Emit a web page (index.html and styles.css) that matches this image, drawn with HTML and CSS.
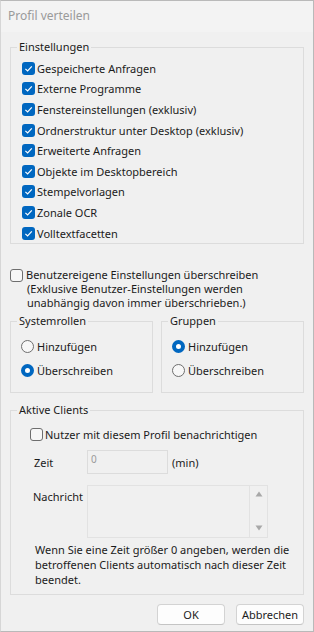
FILE: index.html
```html
<!DOCTYPE html>
<html lang="de">
<head>
	<meta charset="utf-8">
	<title>Profil verteilen</title>
	<link rel="stylesheet" href="styles.css">
</head>
<body>
	<div class="window">
		<div class="titlebar">Profil verteilen</div>

		<div class="content">
			<fieldset class="group">
				<legend>Einstellungen</legend>
				<div class="group-body settings">
					<label class="check"><span class="box on"><svg viewBox="0 0 13 13"><path d="M3.4 6.8 L5.6 9 L9.8 4.4"/></svg></span>Gespeicherte Anfragen</label>
					<label class="check"><span class="box on"><svg viewBox="0 0 13 13"><path d="M3.4 6.8 L5.6 9 L9.8 4.4"/></svg></span>Externe Programme</label>
					<label class="check"><span class="box on"><svg viewBox="0 0 13 13"><path d="M3.4 6.8 L5.6 9 L9.8 4.4"/></svg></span>Fenstereinstellungen (exklusiv)</label>
					<label class="check"><span class="box on"><svg viewBox="0 0 13 13"><path d="M3.4 6.8 L5.6 9 L9.8 4.4"/></svg></span>Ordnerstruktur unter Desktop (exklusiv)</label>
					<label class="check"><span class="box on"><svg viewBox="0 0 13 13"><path d="M3.4 6.8 L5.6 9 L9.8 4.4"/></svg></span>Erweiterte Anfragen</label>
					<label class="check"><span class="box on"><svg viewBox="0 0 13 13"><path d="M3.4 6.8 L5.6 9 L9.8 4.4"/></svg></span>Objekte im Desktopbereich</label>
					<label class="check"><span class="box on"><svg viewBox="0 0 13 13"><path d="M3.4 6.8 L5.6 9 L9.8 4.4"/></svg></span>Stempelvorlagen</label>
					<label class="check"><span class="box on"><svg viewBox="0 0 13 13"><path d="M3.4 6.8 L5.6 9 L9.8 4.4"/></svg></span>Zonale OCR</label>
					<label class="check"><span class="box on"><svg viewBox="0 0 13 13"><path d="M3.4 6.8 L5.6 9 L9.8 4.4"/></svg></span>Volltextfacetten</label>
				</div>
			</fieldset>

			<div class="override">
				<label class="check"><span class="box"></span>Benutzereigene Einstellungen überschreiben</label>
				<p class="note">(Exklusive Benutzer-Einstellungen werden<br>unabhängig davon immer überschrieben.)</p>
			</div>

			<div class="columns">
				<fieldset class="group">
					<legend>Systemrollen</legend>
					<div class="group-body radios">
						<label class="radio"><span class="dot"></span>Hinzufügen</label>
						<label class="radio"><span class="dot on"></span>Überschreiben</label>
					</div>
				</fieldset>
				<fieldset class="group">
					<legend>Gruppen</legend>
					<div class="group-body radios">
						<label class="radio"><span class="dot on"></span>Hinzufügen</label>
						<label class="radio"><span class="dot"></span>Überschreiben</label>
					</div>
				</fieldset>
			</div>

			<fieldset class="group clients-group">
				<legend>Aktive Clients</legend>
				<div class="group-body clients">
					<label class="check"><span class="box"></span>Nutzer mit diesem Profil benachrichtigen</label>
					<div class="field">
						<span class="field-label">Zeit</span>
						<span class="input">0</span>
						<span class="unit">(min)</span>
					</div>
					<div class="field message">
						<span class="field-label">Nachricht</span>
						<span class="textarea">
							<span class="scroll">
								<svg viewBox="0 0 8 6"><path d="M4 0.5 L7.5 5.5 L0.5 5.5 Z"/></svg>
								<svg viewBox="0 0 8 6"><path d="M0.5 0.5 L7.5 0.5 L4 5.5 Z"/></svg>
							</span>
						</span>
					</div>
					<p class="hint">Wenn Sie eine Zeit größer 0 angeben, werden die<br>betroffenen Clients automatisch nach dieser Zeit<br>beendet.</p>
				</div>
			</fieldset>

			<div class="buttons">
				<button class="btn ok">OK</button>
				<button class="btn">Abbrechen</button>
			</div>
		</div>
	</div>
</body>
</html>
```

FILE: styles.css
```css
html, body {
	margin: 0;
	padding: 0;
	background: #f0f0f0;
}

body {
	font-family: "Noto Sans", sans-serif;
	font-size: 11px;
	color: #1b1b1b;
}

.window {
	width: 314px;
	height: 632px;
	box-sizing: border-box;
	border: 1px solid #b9b9b9;
	border-left-color: #d6d6d6;
	background: #f0f0f0;
}

.titlebar {
	height: 31px;
	line-height: 30px;
	padding-left: 7px;
	background: #f3f3f3;
	color: #9a9a9a;
	font-size: 12px;
}

.content {
	padding: 7px 9px 0 9px;
}

/* group boxes */
.group {
	margin: 0;
	padding: 0;
	border: 1px solid #dcdcdc;
	min-width: 0;
}

.group legend {
	margin-left: 6px;
	padding: 0 2px;
	line-height: 16px;
}

.group-body {
	display: flex;
	flex-direction: column;
}

.settings {
	padding: 3px 0 0 11px;
}

.settings .check {
	height: 20.6px;
}

/* checkbox */
.check {
	display: flex;
	align-items: center;
	gap: 2px;
}

.box {
	width: 13px;
	height: 13px;
	box-sizing: border-box;
	border: 1px solid #6e6e6e;
	border-radius: 3px;
	background: #f7f7f7;
	flex-shrink: 0;
}

.box.on {
	border: none;
	background: #0067c0;
}

.box svg {
	display: block;
	width: 13px;
	height: 13px;
	fill: none;
	stroke: #fff;
	stroke-width: 1.2;
}

/* override line */
.override {
	margin-top: 24px;
	line-height: 14px;
}

.override .check {
	gap: 3px;
}

.note {
	margin: 0;
	padding-left: 17px;
}

/* radio columns */
.columns {
	display: grid;
	grid-template-columns: 1fr 1fr;
	gap: 8px;
	margin-top: 3px;
}

.radios {
	padding: 5px 0 10px 10px;
}

.radio {
	display: flex;
	align-items: center;
	gap: 3px;
	height: 24px;
}

.dot {
	width: 13px;
	height: 13px;
	box-sizing: border-box;
	border: 1px solid #6e6e6e;
	border-radius: 50%;
	background: #f7f7f7;
}

.dot.on {
	border: 4px solid #0067c0;
	background: #fff;
}

/* active clients */
.clients-group {
	margin-top: 9px;
}

.clients {
	padding: 9px 0 7px 0;
}

.clients .check {
	margin-left: 19px;
	height: 15px;
}

.field {
	display: flex;
	align-items: center;
	margin-top: 8px;
}

.field-label {
	width: 76px;
	padding-left: 23px;
	box-sizing: border-box;
	flex-shrink: 0;
}

.input {
	width: 81px;
	height: 24px;
	box-sizing: border-box;
	border: 1px solid #dcdcdc;
	padding: 1px 0 0 3px;
	color: #9a9a9a;
	font-size: 10px;
	line-height: 14px;
	align-self: flex-start;
}

.unit {
	margin-left: 4px;
}

.message {
	align-items: flex-start;
	margin-top: 11px;
}

.message .field-label {
	padding-top: 4px;
	padding-left: 22px;
}

.textarea {
	width: 181px;
	height: 53px;
	box-sizing: border-box;
	border: 1px solid #e2e2e2;
	display: flex;
	justify-content: flex-end;
}

.scroll {
	width: 17px;
	border-left: 1px solid #e2e2e2;
	display: flex;
	flex-direction: column;
	justify-content: space-between;
	align-items: center;
	padding: 5px 0 6px;
}

.scroll svg {
	width: 8px;
	height: 6px;
	fill: #a8a8a8;
}

.hint {
	margin: 4px 0 0 24px;
	line-height: 15px;
}

/* buttons */
.buttons {
	display: flex;
	justify-content: flex-end;
	gap: 11px;
	margin-top: 9px;
}

.btn {
	width: 68px;
	height: 21px;
	padding: 0;
	font: inherit;
	color: #1b1b1b;
	background: #fdfdfd;
	border: 1px solid #d3d3d3;
	border-bottom-color: #c4c4c4;
	border-radius: 4px;
}
```
